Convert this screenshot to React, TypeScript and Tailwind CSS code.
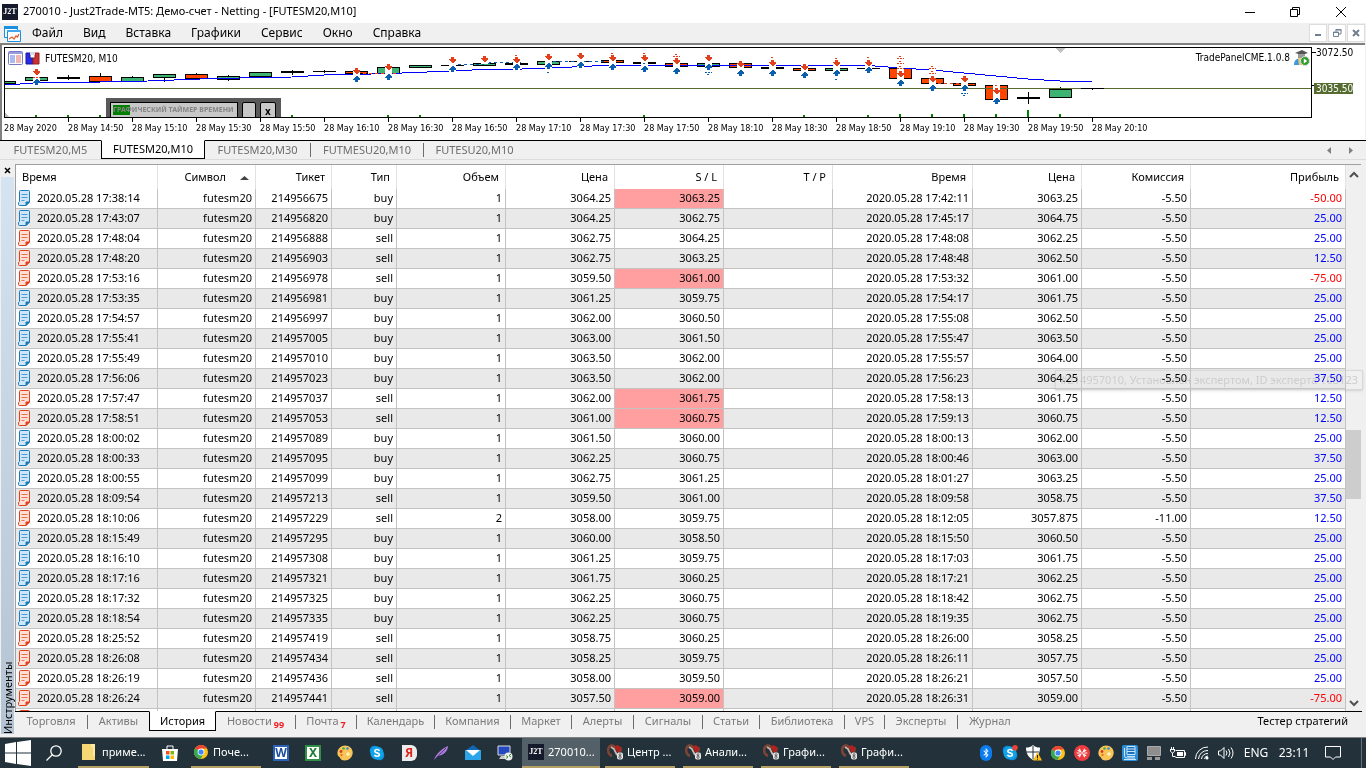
import type { ReactNode } from "react";
import clsx from "clsx";
import { FaBluetoothB } from "react-icons/fa";

type Deal = {
  time: string;
  ticket: string;
  type: "buy" | "sell";
  price: string;
  sl: string;
  closeTime: string;
  close: string;
  profit: string;
  stopped?: boolean;
  volume?: string;
  fee?: string;
};

const deals: Deal[] = [
  { time: "17:38:14", ticket: "214956675", type: "buy", price: "3064.25", sl: "3063.25", closeTime: "17:42:11", close: "3063.25", profit: "-50.00", stopped: true },
  { time: "17:43:07", ticket: "214956820", type: "buy", price: "3064.25", sl: "3062.75", closeTime: "17:45:17", close: "3064.75", profit: "25.00" },
  { time: "17:48:04", ticket: "214956888", type: "sell", price: "3062.75", sl: "3064.25", closeTime: "17:48:08", close: "3062.25", profit: "25.00" },
  { time: "17:48:20", ticket: "214956903", type: "sell", price: "3062.75", sl: "3063.25", closeTime: "17:48:48", close: "3062.50", profit: "12.50" },
  { time: "17:53:16", ticket: "214956978", type: "sell", price: "3059.50", sl: "3061.00", closeTime: "17:53:32", close: "3061.00", profit: "-75.00", stopped: true },
  { time: "17:53:35", ticket: "214956981", type: "buy", price: "3061.25", sl: "3059.75", closeTime: "17:54:17", close: "3061.75", profit: "25.00" },
  { time: "17:54:57", ticket: "214956997", type: "buy", price: "3062.00", sl: "3060.50", closeTime: "17:55:08", close: "3062.50", profit: "25.00" },
  { time: "17:55:41", ticket: "214957005", type: "buy", price: "3063.00", sl: "3061.50", closeTime: "17:55:47", close: "3063.50", profit: "25.00" },
  { time: "17:55:49", ticket: "214957010", type: "buy", price: "3063.50", sl: "3062.00", closeTime: "17:55:57", close: "3064.00", profit: "25.00" },
  { time: "17:56:06", ticket: "214957023", type: "buy", price: "3063.50", sl: "3062.00", closeTime: "17:56:23", close: "3064.25", profit: "37.50" },
  { time: "17:57:47", ticket: "214957037", type: "sell", price: "3062.00", sl: "3061.75", closeTime: "17:58:13", close: "3061.75", profit: "12.50", stopped: true },
  { time: "17:58:51", ticket: "214957053", type: "sell", price: "3061.00", sl: "3060.75", closeTime: "17:59:13", close: "3060.75", profit: "12.50", stopped: true },
  { time: "18:00:02", ticket: "214957089", type: "buy", price: "3061.50", sl: "3060.00", closeTime: "18:00:13", close: "3062.00", profit: "25.00" },
  { time: "18:00:33", ticket: "214957095", type: "buy", price: "3062.25", sl: "3060.75", closeTime: "18:00:46", close: "3063.00", profit: "37.50" },
  { time: "18:00:55", ticket: "214957099", type: "buy", price: "3062.75", sl: "3061.25", closeTime: "18:01:27", close: "3063.25", profit: "25.00" },
  { time: "18:09:54", ticket: "214957213", type: "sell", price: "3059.50", sl: "3061.00", closeTime: "18:09:58", close: "3058.75", profit: "37.50" },
  { time: "18:10:06", ticket: "214957229", type: "sell", price: "3058.00", sl: "3059.75", closeTime: "18:12:05", close: "3057.875", profit: "12.50", volume: "2", fee: "-11.00" },
  { time: "18:15:49", ticket: "214957295", type: "buy", price: "3060.00", sl: "3058.50", closeTime: "18:15:50", close: "3060.50", profit: "25.00" },
  { time: "18:16:10", ticket: "214957308", type: "buy", price: "3061.25", sl: "3059.75", closeTime: "18:17:03", close: "3061.75", profit: "25.00" },
  { time: "18:17:16", ticket: "214957321", type: "buy", price: "3061.75", sl: "3060.25", closeTime: "18:17:21", close: "3062.25", profit: "25.00" },
  { time: "18:17:32", ticket: "214957325", type: "buy", price: "3062.25", sl: "3060.75", closeTime: "18:18:42", close: "3062.75", profit: "25.00" },
  { time: "18:18:54", ticket: "214957335", type: "buy", price: "3062.25", sl: "3060.75", closeTime: "18:19:35", close: "3062.75", profit: "25.00" },
  { time: "18:25:52", ticket: "214957419", type: "sell", price: "3058.75", sl: "3060.25", closeTime: "18:26:00", close: "3058.25", profit: "25.00" },
  { time: "18:26:08", ticket: "214957434", type: "sell", price: "3058.25", sl: "3059.75", closeTime: "18:26:11", close: "3057.75", profit: "25.00" },
  { time: "18:26:19", ticket: "214957436", type: "sell", price: "3058.00", sl: "3059.50", closeTime: "18:26:21", close: "3057.50", profit: "25.00" },
  { time: "18:26:24", ticket: "214957441", type: "sell", price: "3057.50", sl: "3059.00", closeTime: "18:26:31", close: "3059.00", profit: "-75.00", stopped: true },
];

const DAY = "2020.05.28";

// up/down = coloured body, flat = black bar
type Candle = {
  kind: "up" | "down" | "flat";
  top: number;
  bottom: number;
  high?: number;
  low?: number;
  sell?: number[];
  buy?: number[];
  ghostSell?: number[];
  ghostBuy?: number[];
};

const candles: Candle[] = [
  { kind: "up", top: 33, bottom: 35 },
  { kind: "up", top: 29, bottom: 32, sell: [24], buy: [34], ghostSell: [29] },
  { kind: "flat", top: 29, bottom: 30, high: 27, low: 32 },
  { kind: "down", top: 28, bottom: 33, high: 25 },
  { kind: "up", top: 29, bottom: 33, high: 28, low: 34 },
  { kind: "up", top: 26, bottom: 29, low: 34 },
  { kind: "down", top: 26, bottom: 30, high: 25, low: 31 },
  { kind: "up", top: 28, bottom: 31, high: 27, low: 33 },
  { kind: "up", top: 24, bottom: 28 },
  { kind: "flat", top: 23, bottom: 24, high: 22, low: 27 },
  { kind: "flat", top: 23, bottom: 23, high: 22, low: 25 },
  { kind: "down", top: 23, bottom: 25, sell: [23], buy: [31] },
  { kind: "up", top: 19, bottom: 25, sell: [19], ghostSell: [23], buy: [29] },
  { kind: "up", top: 17, bottom: 19 },
  { kind: "flat", top: 17, bottom: 17, sell: [12], buy: [21] },
  { kind: "up", top: 15, bottom: 17, sell: [11] },
  { kind: "flat", top: 15, bottom: 16, sell: [12], ghostSell: [9], buy: [19] },
  { kind: "up", top: 13, bottom: 16, sell: [9], buy: [18], ghostBuy: [22] },
  { kind: "flat", top: 13, bottom: 13, sell: [8], buy: [17] },
  { kind: "down", top: 12, bottom: 14, sell: [10], ghostSell: [7, 14], buy: [19] },
  { kind: "flat", top: 14, bottom: 15, sell: [10], ghostSell: [7], buy: [21], ghostBuy: [17] },
  { kind: "down", top: 15, bottom: 18, sell: [13], ghostSell: [8], buy: [23], ghostBuy: [19] },
  { kind: "up", top: 15, bottom: 18, sell: [10], ghostSell: [14], buy: [19], ghostBuy: [24] },
  { kind: "down", top: 15, bottom: 19, sell: [16], buy: [25], ghostBuy: [22] },
  { kind: "flat", top: 19, bottom: 20, sell: [15], ghostSell: [11], buy: [25], ghostBuy: [21] },
  { kind: "down", top: 20, bottom: 22, sell: [19], buy: [27] },
  { kind: "up", top: 20, bottom: 22, sell: [15], ghostSell: [12, 19], buy: [25], ghostBuy: [29] },
  { kind: "flat", top: 20, bottom: 20, sell: [15], ghostSell: [11], buy: [22] },
  { kind: "down", top: 20, bottom: 30, sell: [26], ghostSell: [10, 15, 20], buy: [35], ghostBuy: [31] },
  { kind: "down", top: 30, bottom: 35, sell: [31], ghostSell: [20, 25], buy: [40], ghostBuy: [36] },
  { kind: "down", top: 35, bottom: 37, sell: [31], ghostSell: [35], buy: [40], ghostBuy: [45] },
  { kind: "down", top: 37, bottom: 51, sell: [43], buy: [53], ghostSell: [39], ghostBuy: [49] },
  { kind: "flat", top: 49, bottom: 50, high: 44, low: 56 },
  { kind: "up", top: 40, bottom: 49, high: 39 },
  { kind: "flat", top: 40, bottom: 40, low: 42 },
];

const STEP = 32;

const volumes = [
  [1, 2], [2, 2], [3, 2], [9, 2], [12, 2], [13, 2], [20, 2], [25, 2],
  [27, 2], [28, 3], [29, 3], [30, 3], [31, 3], [32, 7], [33, 3],
];

const timeLabels = [
  "28 May 2020", "28 May 14:50", "28 May 15:10", "28 May 15:30", "28 May 15:50", "28 May 16:10",
  "28 May 16:30", "28 May 16:50", "28 May 17:10", "28 May 17:30", "28 May 17:50", "28 May 18:10",
  "28 May 18:30", "28 May 18:50", "28 May 19:10", "28 May 19:30", "28 May 19:50", "28 May 20:10",
];

const menu = ["Файл", "Вид", "Вставка", "Графики", "Сервис", "Окно", "Справка"];

const panelTabs = [
  { label: "Торговля", width: "w-[73px]" },
  { label: "Активы", width: "w-[61px]" },
  { label: "История", width: "w-[67px]", active: true },
  { label: "Новости", width: "w-[80px]", badge: "99" },
  { label: "Почта", width: "w-[61px]", badge: "7" },
  { label: "Календарь", width: "w-[78px]" },
  { label: "Компания", width: "w-[76px]" },
  { label: "Маркет", width: "w-[61px]" },
  { label: "Алерты", width: "w-[62px]" },
  { label: "Сигналы", width: "w-[69px]" },
  { label: "Статьи", width: "w-[57px]" },
  { label: "Библиотека", width: "w-[85px]" },
  { label: "VPS", width: "w-[40px]" },
  { label: "Эксперты", width: "w-[73px]" },
  { label: "Журнал", width: "w-[64px]" },
];

function Arrow({ x, y, up, ghost }: { x: number; y: number; up?: boolean; ghost?: boolean }) {
  const color = up ? "#0a5fae" : "#e0401c";
  if (ghost) {
    return (
      <g>
        <rect x={x - 3} y={y - 3} width="7" height="7" fill="#fff" />
        <path
          stroke={color}
          strokeDasharray="2 1"
          d={`M${x - 1} ${y - 1.5}h3M${x - 3} ${y + 0.5}h7M${x - 1} ${y + 2.5}h3`}
        />
      </g>
    );
  }
  return (
    <g>
      <rect x={x - 3} y={y - 4} width="7" height="9" fill="#fff" />
      <path
        fill={color}
        d={
          up
            ? `M${x - 3} ${y + 1}v-1l3 -3h1l3 3v1h-2v2h-3v-2z`
            : `M${x - 3} ${y - 1}v1l3 3h1l3 -3v-1h-2v-2h-3v2z`
        }
      />
    </g>
  );
}

function CandleMark({ candle, x }: { candle: Candle; x: number }) {
  const { kind, top, bottom, high, low } = candle;
  const h = bottom - top + 1;
  return (
    <g>
      {(high !== undefined || low !== undefined) && (
        <rect x={x} y={high ?? top} width="1" height={(low ?? bottom) - (high ?? top)} />
      )}
      <rect x={x - 11} y={top} width="23" height={h} />
      {kind !== "flat" && (
        <rect x={x - 10} y={top + 1} width="21" height={h - 2} fill={kind === "up" ? "#3cb371" : "#ff4500"} />
      )}
    </g>
  );
}

function PriceChart() {
  return (
    <svg className="block h-[69px] w-full" shapeRendering="crispEdges">
      {candles.map((c, i) => (
        <CandleMark key={i} candle={c} x={i * STEP - 1} />
      ))}
      <rect x="0" y="40" width="100%" height="1" fill="#556b2f" />
      <path d="M1044 41v8h22v-8z" fill="#3cb371" stroke="#000" />
      <path d="M1076 40.500h23M1087.500 40v2" stroke="#000" />
      {volumes.map(([i, h]) => (
        <rect key={i} x={i * STEP - 2} y={69 - h} width="2" height={h} fill="#008000" />
      ))}
      <polyline
        fill="none"
        stroke="#0000ff"
        points="0,36 15,36 47,34 95,34 143,33 195,31 235,30 287,29 319,27 367,26 397,25 447,23 487,21 517,21 567,19 587,18 610,17 750,17 800,17 850,17 870,18 895,20 927,22 959,25 991,28 1023,31 1055,33 1087,34"
      />
      <path d="M352 25.500h40" stroke="#ff4500" strokeDasharray="3 3" />
      <path d="M447 16.500h30l10 -2h30M542 13.500h60" stroke="#0a5fae" fill="none" strokeDasharray="3 3" />
      <path d="M927 35.500h32" stroke="#e0401c" strokeDasharray="3 3" />
      {candles.map((c, i) => {
        const x = i * STEP - 1;
        return (
          <g key={i}>
            {c.ghostSell?.map((y) => <Arrow key={`gs${y}`} x={x} y={y} ghost />)}
            {c.ghostBuy?.map((y) => <Arrow key={`gb${y}`} x={x} y={y} up ghost />)}
            {c.sell?.map((y) => <Arrow key={`s${y}`} x={x} y={y} />)}
            {c.buy?.map((y) => <Arrow key={`b${y}`} x={x} y={y} up />)}
          </g>
        );
      })}
      <path d="M1050 0h10l-5 5z" fill="#c0c0c0" />
      <path d="M0 65l4 4h-4z" fill="#c0c0c0" />
    </svg>
  );
}

function DocIcon({ sell }: { sell?: boolean }) {
  const dark = sell ? "#e0401c" : "#1b7ab8";
  const light = sell ? "#ffe0d4" : "#cfe6fa";
  return (
    <svg className="h-4 w-3 shrink-0" viewBox="0 0 12 16">
      <path d="M2.500 .5h8q1 0 1 1v10.500l-3.500 3.500h-6.500q-1 0-1-1v-2l1-1v-10q0-1 1-1z" fill={light} stroke={dark} />
      <path d="M8 15.500v-3.500h3.500z" fill={dark} stroke={dark} />
      <path d="M3.500 4.500h6M3.500 7.500h6M3.500 10.500h3" stroke={dark} strokeOpacity=".7" />
    </svg>
  );
}

function J2T() {
  return (
    <span className="flex size-4 shrink-0 items-center justify-center bg-[#14192b] font-['Liberation_Serif',serif] text-[8px] font-bold leading-none text-white">
      J2T
    </span>
  );
}

function Chrome() {
  return (
    <svg className="size-3.5" viewBox="0 0 14 14">
      <circle cx="7" cy="7" r="7" fill="#fbc116" />
      <path d="M7 7L1 3.400A7 7 0 0 1 13.100 3.600H7z" fill="#ea4335" />
      <path d="M7 7L1 3.400A7 7 0 0 0 6.500 14L9.500 9z" fill="#34a853" />
      <circle cx="7" cy="7" r="3.400" fill="#fff" />
      <circle cx="7" cy="7" r="2.600" fill="#4285f4" />
    </svg>
  );
}

function Palette() {
  return (
    <svg className="size-4" viewBox="0 0 16 16">
      <path d="M8 .5C12.500 .5 16 4 15.700 8c-.2 4-3.700 7.500-8 7.500-3 0-4-1-4.500-2.500-.5-1.300-2.200-1.500-2.500-3C.4 8.500 .3 8 .5 7 1 3.500 4 .5 8 .5z" fill="#f9c556" />
      <circle cx="4" cy="6.500" r="1.400" fill="#d33a2c" />
      <circle cx="6.500" cy="3.500" r="1.300" fill="#4fa83d" />
      <circle cx="10.500" cy="3.500" r="1.300" fill="#3b86d8" />
      <circle cx="4.500" cy="10" r="1.200" fill="#e8782c" />
      <circle cx="11" cy="9" r="1.700" fill="#fff3c8" />
    </svg>
  );
}

function Skype({ alert }: { alert?: boolean }) {
  return (
    <svg className="size-4" viewBox="0 0 16 16">
      <circle cx="5.500" cy="5.500" r="4.800" fill="#0a8fdc" />
      <circle cx="10.500" cy="10.500" r="4.800" fill="#0a8fdc" />
      <circle cx="8" cy="8" r="6.600" fill="#10a3ea" />
      <path d="M10.500 5.800C9.500 4 5.800 4.200 5.800 6.200 5.800 8.500 10.400 7.300 10.400 9.600c0 2.200-3.900 2.200-5 .2" fill="none" stroke="#fff" strokeWidth="1.600" />
      {alert && <circle cx="13" cy="2.800" r="2.800" fill="#ee4136" />}
    </svg>
  );
}

function OfficeIcon({ letter, className }: { letter: string; className: string }) {
  return (
    <span className={clsx("flex size-4 items-center justify-center border-2 bg-white text-[12px] font-bold leading-none", className)}>
      {letter}
    </span>
  );
}

function Broker() {
  return (
    <svg className="size-4 shrink-0" viewBox="0 0 16 16">
      <path d="M5 12C0 10 0 3 4 1.500 7 1 8 3 8 5" fill="none" stroke="#7b4535" strokeWidth="2.500" />
      <path d="M4 3l3 2 3 6" fill="none" stroke="#c9b8ae" strokeWidth="1.800" />
      <path d="M8 2l3-1 1 1 2 1v4l-2 2-2-1z" fill="#b3201e" />
      <path d="M14 3q1.500 3-.5 5" fill="none" stroke="#7b4535" />
      <rect x="10" y="8.500" width="6" height="7" rx="2" fill="#e9e9e9" />
      <circle cx="13" cy="10.700" r="1" fill="none" stroke="#444" strokeWidth=".8" />
      <circle cx="13" cy="13.200" r="1.200" fill="none" stroke="#444" strokeWidth=".8" />
    </svg>
  );
}

function TaskButton({ icon, label, active, width }: { icon: ReactNode; label: string; active?: boolean; width: string }) {
  return (
    <button
      className={clsx(
        "flex h-full items-center whitespace-nowrap border-b-2 border-[#b5a064] text-[11px] text-white",
        active ? "gap-1 bg-[#536067] pl-1.5" : "gap-1 pl-0.5",
        width,
      )}
    >
      {icon}
      <span>{label}</span>
    </button>
  );
}

function TitleBar() {
  return (
    <header className="flex h-[23px] shrink-0 items-center bg-white pl-0.5 pr-0.5 text-[11px]">
      <J2T />
      <h1 className="ml-[5px]">270010 - Just2Trade-MT5: Демо-счет - Netting - [FUTESM20,M10]</h1>
      <div className="ml-auto flex h-full text-black">
        <button aria-label="Свернуть" className="flex w-[45px] items-center justify-center">
          <svg className="size-3" viewBox="0 0 12 12"><path d="M1 6.500h10" stroke="currentColor" /></svg>
        </button>
        <button aria-label="Восстановить" className="flex w-[46px] items-center justify-center">
          <svg className="size-3" viewBox="0 0 12 12"><path d="M1.500 3.500h7v7h-7zM3.500 3.500v-2h7v7h-2" fill="none" stroke="currentColor" /></svg>
        </button>
        <button aria-label="Закрыть" className="flex w-[46px] items-center justify-center">
          <svg className="size-3" viewBox="0 0 12 12"><path d="M1 1l10 10M11 1L1 11" stroke="currentColor" /></svg>
        </button>
      </div>
    </header>
  );
}

function MenuBar() {
  return (
    <nav className="flex h-5 shrink-0 items-center pl-1 pr-px text-[12px]">
      <svg className="mr-[11px] size-[17px]" viewBox="0 0 17 17">
        <path d="M.5 1.500h13v11h-13z" fill="#fff" stroke="#1b8fe0" />
        <path d="M0 1h14v3H0z" fill="#1b8fe0" />
        <path d="M3.500 5.500h13v11h-13z" fill="#fff" stroke="#1b8fe0" />
        <path d="M3 5h14v2H3z" fill="#40a8ee" />
        <path d="M5 14l3-2 2 2 2-3 1.500 1L15 9" fill="none" stroke="#e0602c" strokeWidth="1.300" />
      </svg>
      <div className="flex gap-5">
        {menu.map((m) => (
          <button key={m}>{m}</button>
        ))}
      </div>
      <div className="ml-auto flex gap-px text-[#708090]">
        <button aria-label="Свернуть график" className="flex size-[18px] items-center justify-center border border-[#dcdcdc] bg-white">
          <svg className="size-2.5" viewBox="0 0 10 10"><path d="M2 7h6" stroke="currentColor" strokeWidth="2" /></svg>
        </button>
        <button aria-label="Восстановить график" className="flex size-[18px] items-center justify-center border border-[#dcdcdc] bg-white">
          <svg className="size-2.5" viewBox="0 0 10 10"><path d="M1.500 4h5v4.500h-5zM1 4.500h6M4 3.500V1.500h5V6H7M3.500 2h6" fill="none" stroke="currentColor" /></svg>
        </button>
        <button aria-label="Закрыть график" className="flex size-[18px] items-center justify-center border border-[#dcdcdc] bg-white">
          <svg className="size-2.5" viewBox="0 0 10 10"><path d="M2 2l6 6M8 2L2 8" stroke="currentColor" strokeWidth="2" /></svg>
        </button>
      </div>
    </nav>
  );
}

function ChartWindow() {
  return (
    <section className="mr-px h-[97px] shrink-0 border-l-2 border-t-2 border-[#808080] bg-white pl-0.5 pt-0.5 font-['DejaVu_Sans_Condensed','DejaVu_Sans',sans-serif] text-[10px] leading-3">
      <div className="flex">
        <div className="relative h-[71px] flex-1 overflow-hidden border border-black">
          <PriceChart />
          <div className="absolute left-[3px] top-[3px] flex items-center gap-0.5">
            <svg className="size-[15px]" viewBox="0 0 15 15">
              <rect x=".5" y=".5" width="14" height="13" rx="1" fill="#fff" stroke="#7878c8" />
              <path d="M1 1h13v2H1z" fill="#9a9ae0" />
              <path d="M2 5h5M2 7h5M2 9h5M2 11h5" stroke="#5a78e0" />
              <path d="M8 5h5M8 7h5M8 9h5M8 11h5" stroke="#e07060" />
            </svg>
            <svg className="size-[15px]" viewBox="0 0 15 15">
              <path d="M1 2h4v5h3v6H1z" fill="#2a2ae0" stroke="#1818a0" />
              <path d="M14 2h-4v5H8v6h6z" fill="#c83232" stroke="#982020" />
              <path d="M5 1h5v3H5z" fill="#d8d8e8" />
            </svg>
            <span className="ml-[3px]">FUTESM20, M10</span>
          </div>
          <div className="absolute right-px top-0.5 flex items-center gap-1">
            TradePanelCME.1.0.8
            <svg className="size-4" viewBox="0 0 16 16">
              <path d="M1 3l7-3 6 3-6 2z" fill="#555" />
              <path d="M4 4h7v4H4z" fill="#9a9a9a" />
              <path d="M0 15c0-5 3-7 7-7v7z" fill="#3b9be0" />
              <path d="M4 8h4v7H5z" fill="#f0c870" />
              <circle cx="11" cy="11" r="4.500" fill="#2f9e2f" stroke="#ddd" />
              <path d="M9.800 8.500l3.500 2.500-3.500 2.500z" fill="#fff" />
            </svg>
          </div>
          <div className="absolute left-[101px] top-[50px] flex h-5 w-[175px] gap-1 bg-[#595959] pl-1 pt-1">
            <div className="h-5 w-32 border border-black bg-[#c8c8c8] p-0.5">
              <div className="whitespace-nowrap bg-linear-to-r from-[#008000] from-14% to-[#c8c8c8] to-14% font-['Noto_Sans',sans-serif] text-[7px] font-bold leading-[10px] text-[#858585]">
                ГРАФИЧЕСКИЙ ТАЙМЕР ВРЕМЕНИ
              </div>
            </div>
            <button aria-label="Пауза" className="h-5 w-3.5 rounded-t-xs border border-black bg-[#c8c8c8]" />
            <button className="h-5 w-4 rounded-t-xs border border-black bg-[#c8c8c8] text-[10px] font-bold">x</button>
          </div>
        </div>
        <div className="w-[53px]">
          <div className="flex h-9 items-start">
            <span className="mt-[5px] h-px w-1 bg-black" />
            <span>3072.50</span>
          </div>
          <div className="flex items-start">
            <span className="mt-0.5 h-px w-0.5 bg-black" />
            <span className="h-[11px] w-[39px] bg-[#556b2f] pl-0.5 leading-[11px] text-white">3035.50</span>
          </div>
        </div>
      </div>
      <ol className="flex overflow-hidden whitespace-nowrap text-[9px]">
        {timeLabels.map((t, i) => (
          <li key={t} className="w-16 shrink-0">
            <div className={clsx("h-1 w-px", i > 0 && "bg-black")} />
            {t}
          </li>
        ))}
      </ol>
    </section>
  );
}

function ChartTabs() {
  return (
    <div className="mb-1 flex h-5 shrink-0 items-stretch border-b border-[#dcdcdc] text-[11px] text-[#6d6d6d]">
      <button className="w-[101px] border-t border-black">FUTESM20,M5</button>
      <button className="w-[104px] border border-t-white border-black bg-white text-black">FUTESM20,M10</button>
      <div className="flex flex-1 items-center border-t border-black">
        <button className="w-[105px]">FUTESM20,M30</button>
        <span className="h-3.5 w-px bg-[#6d6d6d]" />
        <button className="w-28">FUTMESU20,M10</button>
        <span className="h-3.5 w-px bg-[#6d6d6d]" />
        <button className="w-[101px]">FUTESU20,M10</button>
        <div className="ml-auto flex gap-[18px] pr-[13px] text-[#808080]">
          <svg className="h-[7px] w-1" viewBox="0 0 4 7"><path d="M4 0v7L0 3.500z" fill="currentColor" /></svg>
          <svg className="h-[7px] w-1" viewBox="0 0 4 7"><path d="M0 0v7l4-3.500z" fill="currentColor" /></svg>
        </div>
      </div>
    </div>
  );
}

const headers = ["Время", "Символ", "Тикет", "Тип", "Объем", "Цена", "S / L", "T / P", "Время", "Цена", "Комиссия", "Прибыль"];

function HistoryTable() {
  const cell = "h-5 border-b border-r border-[#c3c3c3] p-0 pb-px pr-[3px] leading-[18px]";
  return (
    <table className="w-full table-fixed border-separate border-spacing-0 text-right text-[11px]">
      <colgroup>
        <col className="w-[142px]" />
        <col className="w-[98px]" />
        <col className="w-[76px]" />
        <col className="w-[65px]" />
        <col className="w-[109px]" />
        <col className="w-[109px]" />
        <col className="w-[109px]" />
        <col className="w-[109px]" />
        <col className="w-[140px]" />
        <col className="w-[109px]" />
        <col className="w-[109px]" />
        <col />
      </colgroup>
      <thead>
        <tr>
          {headers.map((h, i) => (
            <th key={i} className={clsx("h-6 border-r border-[#e2e2e2] p-0 pr-1.5 font-normal leading-5", i === 0 && "pl-1.5 text-left")}>
              {h}
              {h === "Символ" && (
                <svg className="ml-3.5 inline h-1 w-[9px] align-middle" viewBox="0 0 9 4"><path d="M0 4l4.500-4 4.500 4z" fill="#444" /></svg>
              )}
            </th>
          ))}
        </tr>
      </thead>
      <tbody>
        {deals.map((d) => (
          <tr key={d.ticket} className="even:bg-[#e9e9e9]">
            <td className={cell}>
              <div className="flex items-center gap-[7px] pl-0.5">
                <DocIcon sell={d.type === "sell"} />
                {DAY} {d.time}
              </div>
            </td>
            <td className={cell}>futesm20</td>
            <td className={cell}>{d.ticket}</td>
            <td className={cell}>{d.type}</td>
            <td className={cell}>{d.volume ?? "1"}</td>
            <td className={cell}>{d.price}</td>
            <td className={clsx(cell, d.stopped && "bg-[#ff9f9f]")}>{d.sl}</td>
            <td className={cell} />
            <td className={cell}>{DAY} {d.closeTime}</td>
            <td className={cell}>{d.close}</td>
            <td className={cell}>{d.fee ?? "-5.50"}</td>
            <td className={clsx(cell, d.profit.startsWith("-") ? "text-[#ff0000]" : "text-[#0000ff]")}>{d.profit}</td>
          </tr>
        ))}
        <tr>
          <td className={cell}>
            <div className="pl-0.5"><DocIcon sell /></div>
          </td>
          {headers.slice(1).map((h, i) => (
            <td key={i} className={cell} />
          ))}
        </tr>
      </tbody>
    </table>
  );
}

function Toolbox() {
  return (
    <section className="flex min-h-0 flex-1">
      <aside className="flex w-[15px] flex-col items-start pl-px">
        <button aria-label="Закрыть панель" className="flex h-[13px] w-[13px] items-center justify-center">
          <svg className="size-[7px]" viewBox="0 0 7 7"><path d="M1 1l5 5M6 1L1 6" stroke="#000" strokeWidth="1.500" /></svg>
        </button>
        <div className="flex w-[13px] flex-1 items-center bg-linear-to-t from-[#d6e3f1] to-[#b4c3d2] text-[11px] leading-[13px] [writing-mode:vertical-rl] rotate-180">
          Инструменты
        </div>
      </aside>
      <div className="flex min-w-0 flex-1 flex-col">
        <div className="mr-[5px] flex min-h-0 flex-1 border-l border-t border-[#a0a0a0] bg-white">
          <div className="relative min-w-0 flex-1 overflow-hidden">
            <HistoryTable />
          </div>
          <div className="flex w-[15px] flex-col bg-[#f0f0f0] text-[#505050]">
            <svg className="mx-auto mt-1.5 h-2 w-2.5" viewBox="0 0 10 8"><path d="M1 6l4-4 4 4" fill="none" stroke="currentColor" strokeWidth="2" /></svg>
            <div className="flex-1 pt-[251px]">
              <div className="h-[69px] bg-[#cdcdcd]" />
            </div>
            <svg className="mx-auto mb-1 h-2 w-2.5" viewBox="0 0 10 8"><path d="M1 2l4 4 4-4" fill="none" stroke="currentColor" strokeWidth="2" /></svg>
          </div>
        </div>
        <div className="flex h-[23px] shrink-0 items-start text-[11px] text-[#7a7a7a]">
          {panelTabs.map((t, i) => (
            <button
              key={t.label}
              className={clsx(
                "flex items-center border-t border-black",
                t.width,
                t.active ? "h-5 justify-center border border-t-white bg-white text-black" : "h-5",
              )}
            >
              <span className="flex-1">
                {t.label}
                {t.badge && <sub className="ml-0.5 text-[9px] font-bold text-[#f01c24]">{t.badge}</sub>}
              </span>
              {i < panelTabs.length - 1 && i !== 1 && i !== 2 && <span className="h-3.5 w-px bg-[#6d6d6d]" />}
            </button>
          ))}
          <div className="mr-1 flex h-5 flex-1 items-center justify-end border-t border-black pr-3.5 text-black">
            <button>Тестер стратегий</button>
          </div>
        </div>
      </div>
    </section>
  );
}

function Taskbar() {
  return (
    <footer className="flex h-[30px] shrink-0 items-center bg-[#22313a] text-white">
      <button aria-label="Пуск" className="flex w-9 justify-center">
        <svg className="size-[26px]" viewBox="0 0 26 26"><path d="M0 4l11-2v10.500H0zM12 2l14-2v12.500H12zM0 13.500h11V24L0 22zM12 13.500h14V26l-14-2z" fill="#fff" /></svg>
      </button>
      <button aria-label="Поиск" className="mr-1.5 flex w-9 justify-center">
        <svg className="size-4" viewBox="0 0 16 16"><circle cx="10" cy="6" r="5.200" fill="none" stroke="#fff" strokeWidth="1.300" /><path d="M6.500 9.500L.5 15.500" stroke="#fff" strokeWidth="1.300" /></svg>
      </button>
      <TaskButton
        width="w-[71px]"
        label="приме..."
        icon={
          <svg className="mx-0.5 h-4 w-3.5 shrink-0" viewBox="0 0 14 16"><path d="M0 0h9l1 2h3v14H0z" fill="#f7d774" /><path d="M9 0h4v12h-2V3H9z" fill="#fbe9a6" /></svg>
        }
      />
      <button aria-label="Магазин" className="flex w-[42px] justify-center">
        <svg className="size-4" viewBox="0 0 16 16">
          <path d="M5 4V1h6v3" fill="none" stroke="#fff" />
          <path d="M0 4h16l-1 12H1z" fill="#fff" />
          <path d="M4 6h3.500v3.500H4z" fill="#f25022" /><path d="M8.500 6H12v3.500H8.500z" fill="#7fba00" />
          <path d="M4 10.500h3.500V14H4z" fill="#00a4ef" /><path d="M8.500 10.500H12V14H8.500z" fill="#ffb900" />
        </svg>
      </button>
      <TaskButton width="w-[70px]" label="Поче..." icon={<span className="mx-px shrink-0"><Chrome /></span>} />
      <div className="ml-1 grid grid-cols-8">
        <button aria-label="Word" className="flex w-8 items-center justify-center"><OfficeIcon letter="W" className="border-[#2a62b8] text-[#1d4f9f]" /></button>
        <button aria-label="Excel" className="flex w-8 items-center justify-center"><OfficeIcon letter="X" className="border-[#2f8f46] text-[#1e7a35]" /></button>
        <button aria-label="Paint" className="flex w-8 items-center justify-center"><Palette /></button>
        <button aria-label="Skype" className="flex w-8 items-center justify-center"><Skype /></button>
        <button aria-label="Яндекс" className="flex w-8 items-center justify-center">
          <span className="flex h-4 w-[15px] items-center justify-center rounded-r-md bg-[#ececec] text-[12px] font-bold leading-none text-[#e0261c]">Я</span>
        </button>
        <button aria-label="Перо" className="flex w-8 items-center justify-center">
          <svg className="size-3.5" viewBox="0 0 14 14"><path d="M0 14C2 8 7 3 14 0c0 5-4 9-10 10z" fill="#a97bd6" /><path d="M0 14L12 2" stroke="#5d3a8c" /></svg>
        </button>
        <button aria-label="Почта" className="flex w-8 items-center justify-center">
          <svg className="size-4" viewBox="0 0 16 16"><path d="M0 6l8-6 8 6z" fill="#1068b4" /><path d="M0 5h16v10H0z" fill="#2ba4ea" /><path d="M1 5h14l-7 6z" fill="#fff" /></svg>
        </button>
        <button aria-label="Удаленный рабочий стол" className="flex w-8 items-center justify-center">
          <svg className="size-4" viewBox="0 0 16 16"><path d="M1 1h12v9H1z" fill="#2448c0" stroke="#ddd" /><path d="M4 11h6l2 3H2z" fill="#ccc" /><circle cx="11.500" cy="11.500" r="4" fill="#eee" /><path d="M9 10.500l2 1.500-2 1.500M14 9l-2 1.500 2 1.500" fill="none" stroke="#2c9c2c" /></svg>
        </button>
      </div>
      <TaskButton width="ml-px mr-[5px] w-[78px]" active label="270010..." icon={<J2T />} />
      <div className="flex h-full gap-2">
        <TaskButton width="w-[70px]" label="Центр ..." icon={<Broker />} />
        <TaskButton width="w-[70px]" label="Анали..." icon={<Broker />} />
        <TaskButton width="w-[70px]" label="Графи..." icon={<Broker />} />
        <TaskButton width="w-[70px]" label="Графи..." icon={<Broker />} />
      </div>
      <div className="ml-auto flex h-full items-center text-[12px]">
        <span className="flex w-6 justify-center"><span className="flex h-4 w-3 items-center justify-center rounded-full bg-[#0a7cf0]"><FaBluetoothB className="size-2.5" /></span></span>
        <span className="flex w-6 justify-center"><Skype alert /></span>
        <span className="flex w-6 justify-center">
          <svg className="size-4" viewBox="0 0 16 16"><path d="M7 0c2 2 4 2.500 7 2.500C14 8 12 12 7 15 2 12 0 8 0 2.500 3 2.500 5 2 7 0z" fill="#fff" /><path d="M7 1v13M0 7h13" stroke="#22313a" /><path d="M11.500 7l4.500 8.500H7z" fill="#fbbc14" /><path d="M11.500 10v3M11.500 13.700v1" stroke="#222" /></svg>
        </span>
        <span className="flex w-6 justify-center"><Chrome /></span>
        <span className="flex w-6 justify-center">
          <svg className="size-4" viewBox="0 0 15 15"><circle cx="7.500" cy="7.500" r="7.500" fill="#ef3b3f" /><path d="M3.500 5l3 1.500L5 3.500M11.500 5l-3 1.500L10 3.500M3.500 10l3-1.500L5 11.500M11.500 10l-3-1.500 1.500 3M2.500 7.500h3M9.500 7.500h3" fill="none" stroke="#fff" /></svg>
        </span>
        <span className="flex w-6 justify-center"><Palette /></span>
        <span className="flex w-6 justify-center">
          <svg className="size-4" viewBox="0 0 16 16"><rect width="16" height="16" rx="2" fill="#2a8fd8" /><path d="M5 1.500h8v8H5zM5 4h8M5 6.500h8" fill="#1b6fb8" stroke="#c8e6fa" /><path d="M2.500 3v8q0 2 3 2H13M5 11.500h8M2 14.500h12" fill="none" stroke="#c8e6fa" /></svg>
        </span>
        <span className="flex w-6 justify-center">
          <svg className="size-4" viewBox="0 0 16 16"><path d="M1.500 1.500h13v9h-13z" fill="#8e8e8e" stroke="#aaa" /><path d="M1 12h5v3H1zM9 12h5v3H9z" fill="#999" /></svg>
        </span>
        <span className="flex w-6 justify-center">
          <svg className="size-4" viewBox="0 0 16 16"><path d="M5.500 5.500h9v7h-9M14.500 7.500h1v3h-1M0 4.500h5M1.500 2v2M3.500 2v2M.5 4.500v2q2 3 4 0v-2M2.500 8v3.500h3" fill="none" stroke="#fff" /><path d="M7 7h6v4H7z" fill="#fff" /></svg>
        </span>
        <span className="flex w-6 justify-center">
          <svg className="size-3.5" viewBox="0 0 14 14"><path d="M.5 13A12 12 0 0 1 13 1M3.500 13A9 9 0 0 1 13 4.500M6.500 13A6 6 0 0 1 13 7.500M9.500 13A3.500 3.500 0 0 1 13 10" fill="none" stroke="#fff" /><circle cx="12" cy="12" r="1.500" fill="#fff" /></svg>
        </span>
        <span className="flex w-6 justify-center">
          <svg className="h-3.5 w-4" viewBox="0 0 16 14"><path d="M.5 5h2L6 1.500v11L2.500 9h-2zM8 4.500q2 2.500 0 5M10.500 3q3 4 0 8M13 1.500q4 5.500 0 11" fill="none" stroke="#fff" /></svg>
        </span>
        <span className="w-9 text-center">ENG</span>
        <time className="w-10 text-center">23:11</time>
        <button aria-label="Уведомления" className="flex w-[38px] justify-center">
          <svg className="size-4" viewBox="0 0 16 16"><path d="M.5 1.500h15v10.500h-5L8 14.500 5.500 12h-5z" fill="none" stroke="#fff" /></svg>
        </button>
        <span className="ml-[9px] mr-1 h-full w-px bg-[#66727a]" />
      </div>
    </footer>
  );
}

export default function App() {
  return (
    <div className="relative flex h-screen flex-col overflow-hidden bg-[#f0f0f0] font-['Noto_Sans','Open_Sans',sans-serif] text-black">
      <TitleBar />
      <MenuBar />
      <ChartWindow />
      <ChartTabs />
      <Toolbox />
      <div className="h-1 shrink-0 border-b border-[#808080] bg-[#f0f0f0]" />
      <Taskbar />
      {/* fading row hint */}
      <div className="pointer-events-none absolute right-[3px] top-[370px] h-5 whitespace-nowrap border border-[#d8d8d8] px-1 text-[11px] leading-[17px] text-[#cdcdcd] mix-blend-darken shadow-sm">
        #214957010, Установлен экспертом, ID эксперта 103123
      </div>
    </div>
  );
}
